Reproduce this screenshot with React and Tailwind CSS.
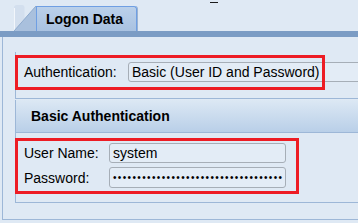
import React from 'react';

const dots = '•'.repeat(35);

export default function App() {
    return (
        <div className="w-[358px] h-[223px] overflow-hidden bg-[#dfe9f4] font-['Liberation_Sans',Arial,sans-serif] text-[14px] leading-none text-black">

            {/* Tab strip */}
            <div className="flex h-[31px] items-end">
                <div className="w-[14px] shrink-0" />
                <svg width="22" height="26" viewBox="0 0 22 26" className="block shrink-0">
                    <path d="M0 26 L0 3 Q0 0 3 0 L8 0 Q10.5 0 10.5 2.5 L10.5 14 Z" fill="#d3dfee" />
                    <path d="M0.5 26 L0.5 3" stroke="#f2f6fb" strokeWidth="1" />
                    <path d="M22 1 L22 26 L0 26 Z" fill="#a9c0dd" />
                    <path d="M22 1 L0 26" stroke="#8eaacd" strokeWidth="1" />
                </svg>
                <div className="flex h-[25px] w-[101px] shrink-0 items-center rounded-tr-[3px] border-l border-t border-r border-[#6f9fe3] bg-linear-to-b from-[#bad0ea] to-[#a9c2e1] pl-[9px] font-bold shadow-[1px_0_0_#9bb3d1]">
                    Logon Data
                </div>
                <div className="ml-[73px] mt-[2px] h-px w-[8px] shrink-0 self-start bg-[#1b1b1b]" />
            </div>

            {/* Band under tabs */}
            <div className="h-[6px] bg-[#7b9cc4]" />

            {/* Panel */}
            <div className="ml-[2px] h-[183px] border-l border-b border-[#9db7d7] pl-[12px] pt-[15px]">

                {/* Authentication group */}
                <div className="relative h-[47px] border-l border-b border-[#9db7d7] pt-[10px] pl-[8px]">
                    <div className="flex items-center">
                        <span className="w-[104px] shrink-0">Authentication:</span>
                        <div className="flex h-[20px] w-[260px] shrink-0 items-center rounded-[3px] border border-[#a6aeb7] bg-[#e3ecf6] pl-[3px]">
                            Basic (User ID and Password)
                        </div>
                    </div>
                    <div className="absolute left-[-1px] top-[3px] h-[35px] w-[310px] border-[3px] border-[#ed1c24]" />
                </div>

                {/* Basic Authentication group */}
                <div className="relative mt-px h-[103px] border-l border-b border-[#9db7d7]">
                    <div className="flex h-[33px] items-center border-b border-[#9db7d7] bg-linear-to-b from-[#dce8f4] to-[#b9cfe8] pl-[15px] font-bold">
                        Basic Authentication
                    </div>
                    <div className="flex flex-col gap-[4px] pt-[10px] pl-[8px]">
                        <div className="flex items-center">
                            <span className="w-[85px] shrink-0">User Name:</span>
                            <div className="flex h-[20px] w-[177px] shrink-0 items-center rounded-[3px] border border-[#a6aeb7] bg-[#e3ecf6] pl-[3px]">
                                system
                            </div>
                        </div>
                        <div className="flex items-center">
                            <span className="w-[85px] shrink-0">Password:</span>
                            <div className="flex h-[21px] w-[177px] shrink-0 items-center overflow-hidden rounded-[3px] border border-[#a6aeb7] bg-[#e3ecf6] pl-[3px] text-[10px] tracking-[1.37px]">
                                {dots}
                            </div>
                        </div>
                    </div>
                    <div className="absolute left-[-1px] top-[38px] h-[56px] w-[284px] border-[3px] border-[#ed1c24]" />
                </div>
            </div>
        </div>
    );
}
